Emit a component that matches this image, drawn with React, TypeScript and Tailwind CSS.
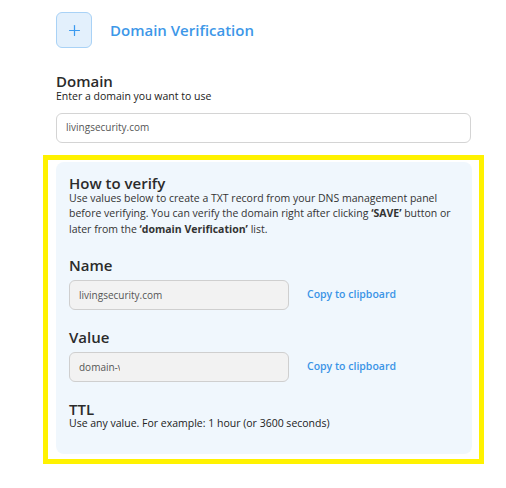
import { Plus } from "lucide-react";

function Heading({ children }: { children: React.ReactNode }) {
  return (
    <h3 className="text-[15px] font-semibold leading-4 text-[#2b2b2b]">
      {children}
    </h3>
  );
}

function CopyField({ value, clip }: { value: string; clip?: boolean }) {
  return (
    <div className="mt-[7px] flex items-center gap-[18px]">
      <div className="flex h-[30px] w-[220px] items-center rounded-md border border-[#cfcfcf] bg-[#f2f2f2] px-[9px] text-[10px] text-[#555]">
        {clip ? (
          <span className="block w-[41px] overflow-hidden whitespace-nowrap">
            {value}
          </span>
        ) : (
          <span>{value}</span>
        )}
      </div>
      <button className="text-[10.5px] font-semibold text-[#3b94e6]">
        Copy to clipboard
      </button>
    </div>
  );
}

export default function App() {
  return (
    <div
      className="h-[488px] w-full bg-white pl-[43px] pr-[22px] pt-3"
      style={{ fontFamily: '"Open Sans", sans-serif' }}
    >
      {/* Header */}
      <div className="flex items-center gap-[18px] px-[13px]">
        <button className="flex h-9 w-9 items-center justify-center rounded-md border border-[#a9d2f6] bg-[#e3f0fc] text-[#3b9bf0]">
          <Plus size={17} strokeWidth={1.75} />
        </button>
        <h2 className="text-[15px] font-semibold text-[#3d97e8]">
          Domain Verification
        </h2>
      </div>

      {/* Domain input */}
      <div className="mt-[25px] px-[13px]">
        <Heading>Domain</Heading>
        <p className="text-[10.5px] leading-[15.5px] text-[#222]">
          Enter a domain you want to use
        </p>
        <div className="mt-2 flex h-[30px] items-center rounded-md border border-[#d4d4d4] bg-white px-[9px] text-[10px] text-[#555]">
          livingsecurity.com
        </div>
      </div>

      {/* Highlighted instructions */}
      <div className="mt-3 border-[5px] border-[#fff200] pb-[5px] pl-[8px] pr-[7px] pt-[2px]">
        <div className="rounded-lg bg-[#f0f7fd] px-[13px] pb-[22px] pt-[13px]">
          <Heading>How to verify</Heading>
          <p className="whitespace-nowrap text-[10.5px] leading-[15.5px] text-[#333]">
            Use values below to create a TXT record from your DNS management
            panel
            <br />
            before verifying. You can verify the domain right after clicking{" "}
            <b className="font-bold">‘SAVE’</b> button or
            <br />
            later from the <b className="font-bold">‘domain Verification’</b>{" "}
            list.
          </p>

          <div className="mt-[20px]">
            <Heading>Name</Heading>
            <CopyField value="livingsecurity.com" />
          </div>

          <div className="mt-[19px]">
            <Heading>Value</Heading>
            <CopyField value="domain-verification=lsv" clip />
          </div>

          <div className="mt-[19px]">
            <Heading>TTL</Heading>
            <p className="-mt-px text-[10.5px] leading-[15.5px] text-[#222]">
              Use any value. For example: 1 hour (or 3600 seconds)
            </p>
          </div>
        </div>
      </div>
    </div>
  );
}
